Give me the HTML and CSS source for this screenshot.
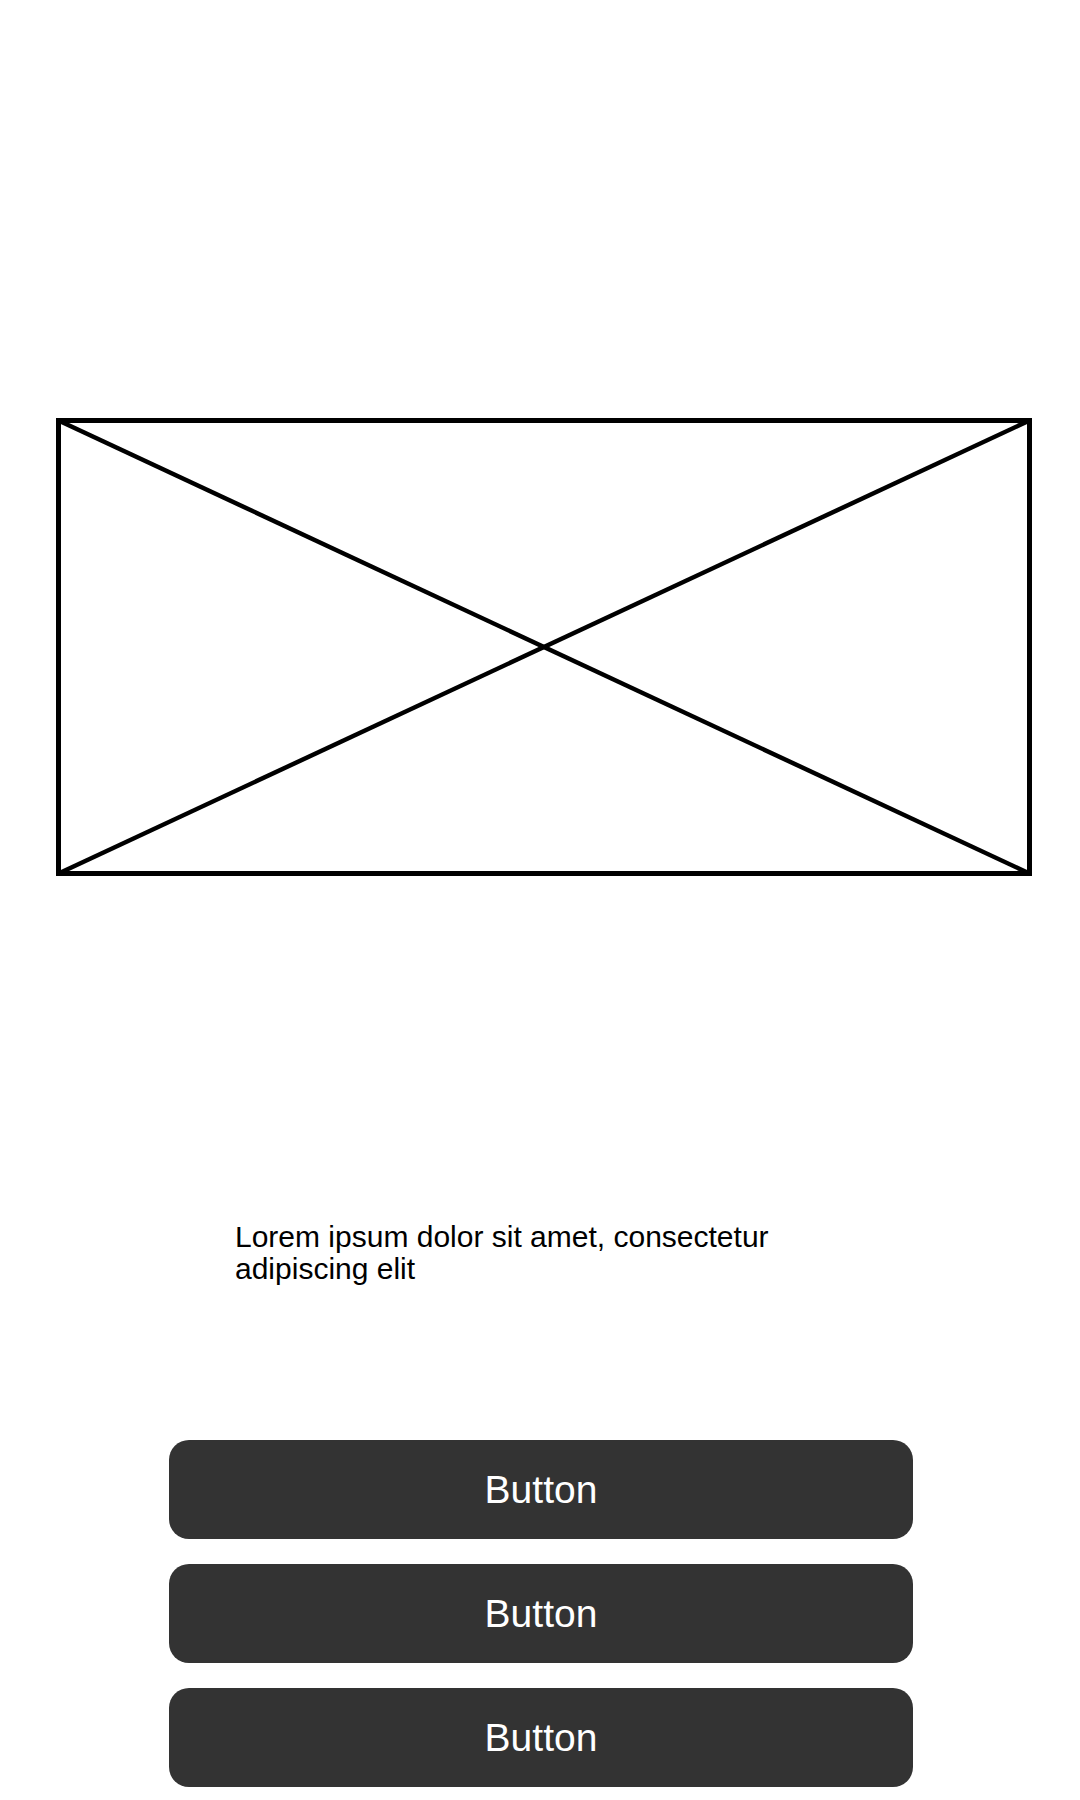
FILE: index.html
```html
<!DOCTYPE html>
<html lang="en">
<head>
<meta charset="utf-8">
<title>Wireframe</title>
<link rel="stylesheet" href="styles.css">
</head>
<body>
<main class="screen">
  <div class="placeholder">
    <svg class="placeholder-svg" viewBox="0 0 976 458" width="976" height="458" aria-hidden="true">
      <rect x="2.5" y="2.5" width="971" height="453" fill="none" stroke="#000" stroke-width="5"/>
      <line x1="2.5" y1="2.5" x2="973.5" y2="455.5" stroke="#000" stroke-width="4.5"/>
      <line x1="973.5" y1="2.5" x2="2.5" y2="455.5" stroke="#000" stroke-width="4.5"/>
    </svg>
  </div>
  <p class="body-text">Lorem ipsum dolor sit amet, consectetur adipiscing elit</p>
  <div class="actions">
    <button class="btn" type="button">Button</button>
    <button class="btn" type="button">Button</button>
    <button class="btn" type="button">Button</button>
  </div>
</main>
</body>
</html>
```

FILE: styles.css
```css
html, body {
  margin: 0;
  padding: 0;
  background: #ffffff;
}

body {
  font-family: "Liberation Sans", Arial, sans-serif;
  color: #000000;
}

.screen {
  width: 1080px;
  min-height: 1800px;
  display: flex;
  flex-direction: column;
  padding-top: 418px;
  box-sizing: border-box;
}

.placeholder {
  padding-left: 56px;
  display: flex;
}

.placeholder-svg {
  display: block;
}

.body-text {
  margin: 345px 0 0 0;
  padding: 0 235px;
  font-size: 30px;
  line-height: 32px;
}

.actions {
  margin-top: 155px;
  display: flex;
  flex-direction: column;
  align-items: center;
  gap: 25px;
}

.btn {
  width: 744px;
  height: 99px;
  border: none;
  border-radius: 20px;
  background: #333333;
  color: #ffffff;
  font-family: "Liberation Sans", Arial, sans-serif;
  font-size: 39px;
  padding: 0;
  margin-left: 2px;
}
```
